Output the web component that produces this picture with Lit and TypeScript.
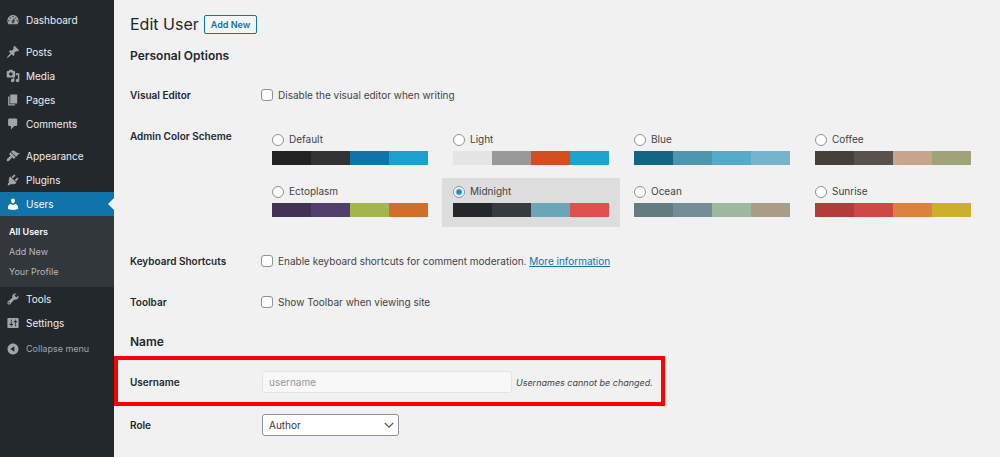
import { LitElement, html, css, svg, nothing } from "lit";
import { customElement, property, state } from "lit/decorators.js";
import { classMap } from "lit/directives/class-map.js";
import { styleMap } from "lit/directives/style-map.js";

const ICONS: Record<string, string> = {
  dashboard:
    "M3.76 16h12.48c1.1-1.37 1.76-3.11 1.76-5 0-4.42-3.58-8-8-8s-8 3.58-8 8c0 1.89.66 3.63 1.76 5zM10 4c.55 0 1 .45 1 1s-.45 1-1 1-1-.45-1-1 .45-1 1-1zM6 6c.55 0 1 .45 1 1s-.45 1-1 1-1-.45-1-1 .45-1 1-1zm8 0c.55 0 1 .45 1 1s-.45 1-1 1-1-.45-1-1 .45-1 1-1zm-5.37 5.55L12 7v6c0 1.1-.9 2-2 2s-2-.9-2-2c0-.57.24-1.08.63-1.45zM4 10c.55 0 1 .45 1 1s-.45 1-1 1-1-.45-1-1 .45-1 1-1zm12 0c.55 0 1 .45 1 1s-.45 1-1 1-1-.45-1-1 .45-1 1-1zm-5 3c0-.55-.45-1-1-1s-1 .45-1 1 .45 1 1 1 1-.45 1-1z",
  posts:
    "M10.44 3.02l1.82-1.82 6.36 6.35-1.83 1.82c-1.05-.68-2.48-.57-3.41.36l-.75.75c-.92.93-1.04 2.35-.35 3.41l-1.83 1.82-2.41-2.41-2.8 2.79c-.42.42-3.38 2.71-3.8 2.29s1.86-3.39 2.28-3.81l2.79-2.79L4.1 9.36l1.83-1.82c1.05.69 2.48.57 3.4-.36l.75-.75c.93-.92 1.05-2.35.36-3.41z",
  media:
    "M13 11V4c0-.55-.45-1-1-1h-1.67L9 1H5L3.67 3H2c-.55 0-1 .45-1 1v7c0 .55.45 1 1 1h10c.55 0 1-.45 1-1zM7 4.5c1.38 0 2.5 1.12 2.5 2.5S8.38 9.5 7 9.5 4.5 8.38 4.5 7 5.62 4.5 7 4.5zM14 6h5v10.5c0 1.38-1.12 2.5-2.5 2.5S14 17.88 14 16.5s1.12-2.5 2.5-2.5c.17 0 .34.02.5.05V9h-3V6zm-4 8.05V13h2v3.5c0 1.38-1.12 2.5-2.5 2.5S7 17.88 7 16.5 8.12 14 9.5 14c.17 0 .34.02.5.05z",
  pages: "M6 15V2h10v13H6zm-1 1h8v2H3V5h2v11z",
  comments:
    "M5 2h9c1.1 0 2 .9 2 2v7c0 1.1-.9 2-2 2h-2l-5 5v-5H5c-1.1 0-2-.9-2-2V4c0-1.1.9-2 2-2z",
  appearance:
    "M14.48 11.06L7.41 3.99l1.5-1.5c.5-.56 2.3-.47 3.51.32 1.21.8 1.43 1.28 2.91 2.1 1.18.64 2.45 1.26 4.45.85zm-.71.71L6.7 4.7 4.93 6.47c-.39.39-.39 1.02 0 1.41l1.06 1.06c.39.39.39 1.03 0 1.42-.6.6-1.43 1.11-2.21 1.69-.35.26-.7.53-1.01.84C1.43 14.23.4 16.08 1.4 17.07c.99 1 2.84-.03 4.18-1.36.31-.31.58-.66.85-1.02.57-.78 1.08-1.61 1.69-2.21.39-.39 1.02-.39 1.41 0l1.06 1.06c.39.39 1.02.39 1.41 0z",
  plugins:
    "M13.11 4.36L9.87 7.6 8 5.73l3.24-3.24c.35-.34 1.05-.2 1.56.32.52.51.66 1.21.31 1.55zm-8 1.77l.91-1.12 9.01 9.01-1.19.84c-.71.71-2.63 1.16-3.82 1.16H6.14L4.9 17.26c-.59.59-1.54.59-2.12 0-.59-.58-.59-1.53 0-2.12l1.24-1.24v-3.88c0-1.13.4-3.19 1.09-3.89zm7.26 3.97l3.24-3.24c.34-.35 1.04-.21 1.55.31.52.51.66 1.21.31 1.55l-3.24 3.25z",
  users:
    "M10 9.25c-2.27 0-2.73-3.44-2.73-3.44C7 4.02 7.82 2 9.97 2c2.16 0 2.98 2.02 2.71 3.81 0 0-.41 3.44-2.68 3.44zm0 2.57L12.72 10c2.39 0 4.52 2.33 4.52 4.53v2.49s-3.65 1.13-7.24 1.13c-3.65 0-7.24-1.13-7.24-1.13v-2.49c0-2.25 1.94-4.48 4.47-4.48z",
  tools:
    "M16.68 9.77c-1.34 1.34-3.3 1.67-4.95.99l-5.41 6.52c-.99.99-2.59.99-3.58 0s-.99-2.59 0-3.57l6.52-5.42c-.68-1.65-.35-3.61.99-4.95 1.28-1.28 3.12-1.62 4.72-1.06l-2.89 2.89 2.82 2.82 2.86-2.87c.53 1.58.18 3.39-1.08 4.65zM3.81 16.21c.4.39 1.04.39 1.43 0 .4-.4.4-1.04 0-1.43-.39-.4-1.03-.4-1.43 0-.39.39-.39 1.03 0 1.43z",
  settings:
    "M18 16V4c0-.55-.45-1-1-1H3c-.55 0-1 .45-1 1v12c0 .55.45 1 1 1h14c.55 0 1-.45 1-1zM8 11h1c.55 0 1 .45 1 1s-.45 1-1 1H8v1.5c0 .28-.22.5-.5.5s-.5-.22-.5-.5V13H6c-.55 0-1-.45-1-1s.45-1 1-1h1V5.5c0-.28.22-.5.5-.5s.5.22.5.5V11zm5-2h-1c-.55 0-1-.45-1-1s.45-1 1-1h1V5.5c0-.28.22-.5.5-.5s.5.22.5.5V7h1c.55 0 1 .45 1 1s-.45 1-1 1h-1v5.5c0 .28-.22.5-.5.5s-.5-.22-.5-.5V9z",
  collapse:
    "M10 2.16c4.33 0 7.84 3.51 7.84 7.84s-3.51 7.84-7.84 7.84S2.16 14.33 2.16 10 5.71 2.16 10 2.16zm2 11.72V6.12L6.18 9.97z",
};

const icon = (name: string) => html`
  <svg class="icon" viewBox="0 0 20 20" aria-hidden="true">
    ${svg`<path fill-rule="evenodd" d=${ICONS[name]}></path>`}
  </svg>
`;

interface MenuItem {
  icon: string;
  label: string;
  children?: string[];
}

const MENU: MenuItem[][] = [
  [{ icon: "dashboard", label: "Dashboard" }],
  [
    { icon: "posts", label: "Posts" },
    { icon: "media", label: "Media" },
    { icon: "pages", label: "Pages" },
    { icon: "comments", label: "Comments" },
  ],
  [
    { icon: "appearance", label: "Appearance" },
    { icon: "plugins", label: "Plugins" },
    { icon: "users", label: "Users", children: ["All Users", "Add New", "Your Profile"] },
    { icon: "tools", label: "Tools" },
    { icon: "settings", label: "Settings" },
  ],
];

const SCHEMES = [
  { name: "Default", colors: ["#222222", "#333333", "#1073aa", "#1ca0d0"] },
  { name: "Light", colors: ["#e5e5e5", "#999999", "#d54f1e", "#1ea4cc"] },
  { name: "Blue", colors: ["#136583", "#4c96b0", "#56abcb", "#75b4ca"] },
  { name: "Coffee", colors: ["#46403b", "#59524c", "#c7a58a", "#9ea477"] },
  { name: "Ectoplasm", colors: ["#413256", "#523f6d", "#a3b64c", "#d16f28"] },
  { name: "Midnight", colors: ["#25282b", "#363b3f", "#6ba6b8", "#df4f4b"] },
  { name: "Ocean", colors: ["#637c80", "#738e96", "#9eb9a0", "#aa9d88"] },
  { name: "Sunrise", colors: ["#b33c3b", "#cf4846", "#dc823f", "#ccaf2b"] },
];

@customElement("admin-menu")
export class AdminMenu extends LitElement {
  @property() current = "Users";

  static styles = css`
    :host {
      display: block;
      padding-top: 8px;
      background: #23282d;
      color: #eeeeee;
      font-size: 10px;
      line-height: 24px;
    }
    .group,
    .submenu {
      margin: 0;
      padding: 0;
      list-style: none;
    }
    .group + .group {
      margin-top: 8px;
    }
    .item,
    .collapse {
      display: flex;
      align-items: center;
      gap: 6px;
      padding: 0 6px;
      color: inherit;
      text-decoration: none;
    }
    .icon {
      flex: none;
      width: 14px;
      height: 14px;
      fill: #a0a5aa;
    }
    .item.current {
      position: relative;
      background: #1073aa;
      color: #ffffff;
    }
    .item.current .icon {
      fill: #ffffff;
    }
    .item.current::after {
      content: "";
      position: absolute;
      right: 0;
      top: 50%;
      margin-top: -6px;
      border: 6px solid transparent;
      border-left-width: 0;
      border-right-color: #f1f1f1;
    }
    .submenu {
      padding: 6px 0 5px;
      background: #32373c;
      font-size: 9px;
      line-height: 20px;
    }
    .sub {
      display: block;
      padding: 0 9px;
      color: #b4b9be;
      text-decoration: none;
    }
    .sub.active {
      color: #ffffff;
      font-weight: 600;
    }
    .collapse {
      width: 100%;
      margin-top: 2px;
      border: 0;
      background: none;
      color: #a0a5aa;
      font: inherit;
      font-size: 9px;
      text-align: left;
    }
  `;

  private renderItem(item: MenuItem) {
    const current = item.label === this.current;
    return html`
      <li>
        <a class=${classMap({ item: true, current })} href="#">${icon(item.icon)}<span>${item.label}</span></a>
        ${current && item.children
          ? html`<ul class="submenu">
              ${item.children.map(
                (label, i) =>
                  html`<li><a class=${classMap({ sub: true, active: i === 0 })} href="#">${label}</a></li>`
              )}
            </ul>`
          : nothing}
      </li>
    `;
  }

  render() {
    return html`
      <nav aria-label="Main menu">
        ${MENU.map((group) => html`<ul class="group">${group.map((item) => this.renderItem(item))}</ul>`)}
        <button class="collapse" type="button">${icon("collapse")}<span>Collapse menu</span></button>
      </nav>
    `;
  }
}

@customElement("color-schemes")
export class ColorSchemes extends LitElement {
  @state() private selected = "Midnight";

  static styles = css`
    :host {
      display: block;
    }
    .grid {
      display: grid;
      grid-template-columns: repeat(4, 1fr);
      gap: 3px;
    }
    .option {
      display: block;
      padding: 6px 11px 10px;
    }
    .option.selected {
      background: #dddddd;
    }
    .name {
      display: flex;
      align-items: center;
      gap: 5px;
      height: 15px;
      margin-bottom: 4px;
    }
    .radio {
      appearance: none;
      box-sizing: border-box;
      width: 12px;
      height: 12px;
      margin: 0;
      border: 1px solid #8a939c;
      border-radius: 50%;
      background: #ffffff;
    }
    .radio:checked {
      background: radial-gradient(circle, #1e8cbe 0 2px, #ffffff 4px);
    }
    .palette {
      display: flex;
      height: 14px;
    }
    .color {
      flex: 1;
    }
  `;

  render() {
    return html`
      <div class="grid" role="radiogroup" aria-label="Admin Color Scheme">
        ${SCHEMES.map(
          ({ name, colors }) => html`
            <label class=${classMap({ option: true, selected: name === this.selected })}>
              <span class="name">
                <input
                  class="radio"
                  type="radio"
                  name="scheme"
                  .checked=${name === this.selected}
                  @change=${() => (this.selected = name)}
                />
                ${name}
              </span>
              <span class="palette">
                ${colors.map((c) => html`<span class="color" style=${styleMap({ background: c })}></span>`)}
              </span>
            </label>
          `
        )}
      </div>
    `;
  }
}

@customElement("app-root")
export class AppRoot extends LitElement {
  static styles = css`
    :host {
      display: grid;
      grid-template-columns: 114px 1fr;
      min-height: 100vh;
      background: #f1f1f1;
      color: #444444;
      font-family: Inter, "Open Sans", sans-serif;
      font-size: 10px;
      line-height: 15px;
    }
    .content {
      padding: 14px 18px 0 16px;
    }
    .head {
      display: flex;
      align-items: center;
      gap: 5px;
    }
    .title {
      margin: 0;
      color: #23282d;
      font-size: 16px;
      font-weight: 400;
      line-height: 20px;
    }
    .add {
      padding: 0 6px;
      border: 1px solid #1073aa;
      border-radius: 2px;
      background: #f3f5f6;
      color: #1073aa;
      font-family: inherit;
      font-size: 9px;
      font-weight: 600;
      line-height: 17px;
    }
    .section {
      margin: 14px 0 11px;
      color: #23282d;
      font-size: 12px;
      font-weight: 600;
      line-height: 16px;
    }
    .section.name {
      margin: 11px 0 6px;
    }
    .row {
      display: grid;
      grid-template-columns: 131px 1fr;
      padding: 13px 0;
    }
    .row.schemes {
      padding: 10px 0 14px;
    }
    .row.schemes .term {
      padding-top: 3px;
    }
    .row.field {
      align-items: center;
      padding: 8px 0;
    }
    .row.marked {
      width: fit-content;
      margin-left: -16px;
      padding: 11px 8px 9px 12px;
      border: 4px solid #fe0000;
    }
    .term {
      color: #23282d;
      font-weight: 600;
    }
    .check {
      display: flex;
      align-items: center;
      gap: 5px;
    }
    .box {
      appearance: none;
      box-sizing: border-box;
      width: 12px;
      height: 12px;
      margin: 0 0 2px;
      border: 1px solid #8a939c;
      border-radius: 3px;
      background: #ffffff;
    }
    .box:checked {
      background: #1e8cbe;
    }
    .link {
      color: #1073aa;
    }
    .control {
      display: flex;
      align-items: center;
      gap: 4px;
      padding-left: 1px;
    }
    .text,
    .select {
      box-sizing: border-box;
      height: 22px;
      margin: 0;
      padding: 0 6px;
      border: 1px solid #8a939c;
      border-radius: 3px;
      font: inherit;
    }
    .text {
      width: 250px;
      border-color: #e3e4e5;
      background: #f8f8f8;
      color: #969696;
    }
    .select {
      appearance: none;
      width: 137px;
      background: #ffffff;
      color: #32373c;
    }
    .picker {
      display: grid;
      align-items: center;
    }
    .picker > * {
      grid-area: 1 / 1;
    }
    .chevron {
      justify-self: end;
      width: 10px;
      height: 10px;
      margin-right: 5px;
      fill: none;
      stroke: #555555;
      stroke-width: 1;
      pointer-events: none;
    }
    .note {
      font-size: 9px;
      font-style: italic;
    }
  `;

  render() {
    return html`
      <admin-menu current="Users"></admin-menu>
      <main class="content">
        <header class="head">
          <h1 class="title">Edit User</h1>
          <button class="add" type="button">Add New</button>
        </header>

        <h2 class="section">Personal Options</h2>
        <div class="row">
          <span class="term">Visual Editor</span>
          <label class="check"><input class="box" type="checkbox" />Disable the visual editor when writing</label>
        </div>
        <div class="row schemes">
          <span class="term">Admin Color Scheme</span>
          <color-schemes></color-schemes>
        </div>
        <div class="row">
          <span class="term">Keyboard Shortcuts</span>
          <div class="check">
            <input class="box" type="checkbox" id="shortcuts" />
            <span
              ><label for="shortcuts">Enable keyboard shortcuts for comment moderation.</label>
              <a class="link" href="#">More information</a></span
            >
          </div>
        </div>
        <div class="row">
          <span class="term">Toolbar</span>
          <label class="check"><input class="box" type="checkbox" />Show Toolbar when viewing site</label>
        </div>

        <h2 class="section name">Name</h2>
        <div class="row field marked">
          <label class="term" for="username">Username</label>
          <div class="control">
            <input class="text" id="username" type="text" value="username" disabled />
            <span class="note">Usernames cannot be changed.</span>
          </div>
        </div>
        <div class="row field">
          <label class="term" for="role">Role</label>
          <div class="control">
            <span class="picker">
              <select class="select" id="role">
                <option>Subscriber</option>
                <option>Contributor</option>
                <option selected>Author</option>
                <option>Editor</option>
                <option>Administrator</option>
              </select>
              <svg class="chevron" viewBox="0 0 8 8" aria-hidden="true"><path d="M.7 2.4 4 5.7l3.3-3.3"></path></svg>
            </span>
          </div>
        </div>
      </main>
    `;
  }
}
